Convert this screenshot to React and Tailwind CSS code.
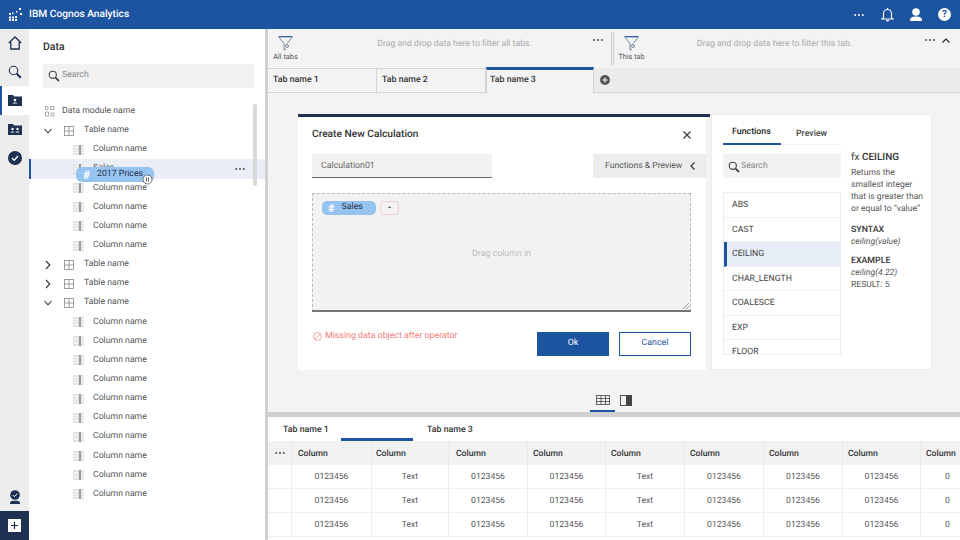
import React from "react";

const Dots = ({ className = "", color = "#555" }) => (
  <svg width="10" height="4" viewBox="0 0 10 4" className={className}>
    <circle cx="1.200" cy="2" r="1" fill={color} />
    <circle cx="5" cy="2" r="1" fill={color} />
    <circle cx="8.800" cy="2" r="1" fill={color} />
  </svg>
);

const SearchIcon = () => (
  <svg width="12" height="12" viewBox="0 0 12 12" fill="none" stroke="#444" className="shrink-0">
    <circle cx="4.800" cy="4.800" r="3.600" strokeWidth="1.100" />
    <path d="M7.600 7.600l3.400 3.400" strokeWidth="1.800" />
  </svg>
);

const ColIcon = () => (
  <svg width="11" height="10" viewBox="0 0 11 10" className="shrink-0">
    <rect x="0" y="0" width="11" height="10" fill="#e4e4e4" />
    <rect x="6" y="0" width="2" height="10" fill="#9a9a9a" />
    <path d="M1 2.500h4M1 5h4M1 7.500h4M8.500 2.500h2M8.500 5h2M8.500 7.500h2" stroke="#fff" strokeWidth="0.800" />
  </svg>
);

const TableIcon = () => (
  <svg width="10" height="10" viewBox="0 0 10 10" fill="none" stroke="#888" strokeWidth="0.800" className="shrink-0">
    <rect x="0.500" y="0.500" width="9" height="9" />
    <path d="M5 0.500v9M0.500 5h9" />
  </svg>
);

const Chevron = ({ open }) => (
  <svg width="8" height="10" viewBox="0 0 8 10" fill="none" stroke="#333" strokeWidth="1.100" className="shrink-0">
    {open ? <path d="M0.500 3l3.500 3.800L7.500 3" /> : <path d="M2 1l3.800 4L2 9" />}
  </svg>
);

const FunnelIcon = () => (
  <svg width="15" height="15" viewBox="0 0 15 15" fill="none" stroke="#5a6b85" strokeWidth="0.800">
    <path d="M0.500 0.700h14" stroke="#1f4f97" strokeWidth="1.200" />
    <path d="M1 1.500l5 6v6.500l2-1M14 1.500L9.200 7.500" />
    <circle cx="9" cy="10" r="1.500" />
  </svg>
);

const Row = ({ children, className = "" }) => (
  <div className={`h-[19.150px] flex items-center ${className}`}>{children}</div>
);

const Column = ({ label = "Column name", className = "" }) => (
  <Row className={`pl-[44px] ${className}`}>
    <ColIcon />
    <span className="ml-[9px] text-[#555]">{label}</span>
  </Row>
);

const TableRow = ({ open }) => (
  <Row className="pl-[15px]">
    <Chevron open={open} />
    <span className="ml-[12px]"><TableIcon /></span>
    <span className="ml-[10px] text-[#555]">Table name</span>
  </Row>
);

const Rail = () => (
  <div className="w-[29px] shrink-0 bg-[#ececec] flex flex-col">
    <div className="h-[28.600px] flex items-center justify-center">
      <svg width="14" height="14" viewBox="0 0 14 14" fill="none" stroke="#1e3152" strokeWidth="1.300"><path d="M0.800 7L7 1l6.200 6M2.800 6v7h8.400V6" /></svg>
    </div>
    <div className="h-[28.600px] flex items-center justify-center">
      <svg width="14" height="14" viewBox="0 0 14 14" fill="none" stroke="#1e3152"><circle cx="5.500" cy="5.500" r="4.200" strokeWidth="1.100" /><path d="M8.800 8.800l4 4" strokeWidth="2" /></svg>
    </div>
    <div className="h-[28.600px] bg-white border-l-2 border-[#1d54a0] flex items-center justify-center pr-[1px] pt-[1px]">
      <svg width="14" height="11" viewBox="0 0 14 11"><path d="M0 0h5l1 1.500h8V11H0z" fill="#1e3152" /><circle cx="7" cy="5" r="1.300" fill="#fff" /><path d="M4.600 8.600c.3-1.600 4.500-1.600 4.800 0z" fill="#fff" /></svg>
    </div>
    <div className="h-[28.600px] flex items-center justify-center">
      <svg width="14" height="11" viewBox="0 0 14 11"><path d="M0 0h5l1 1.500h8V11H0z" fill="#1e3152" /><circle cx="4.500" cy="5" r="1.200" fill="#fff" /><circle cx="9.500" cy="5" r="1.200" fill="#fff" /><path d="M2.500 8.500c.2-1.500 3.800-1.500 4 0zM7.500 8.500c.2-1.500 3.800-1.500 4 0z" fill="#fff" /></svg>
    </div>
    <div className="h-[28.600px] flex items-center justify-center">
      <svg width="14" height="14" viewBox="0 0 14 14"><circle cx="7" cy="7" r="7" fill="#1e3152" /><path d="M4 7l2.200 2.200L10 5" fill="none" stroke="#fff" strokeWidth="1.300" /></svg>
    </div>
    <div className="flex-1" />
    <div className="h-[28px] flex items-center justify-center">
      <svg width="12" height="14" viewBox="0 0 12 14"><circle cx="6" cy="5" r="4.800" fill="#1e3152" /><path d="M3.800 5l1.600 1.600L8.300 3.800" fill="none" stroke="#fff" strokeWidth="1" /><path d="M1 14c0-3 1.500-3.200 5-3.200s5 .2 5 3.200z" fill="#1e3152" /></svg>
    </div>
    <div className="h-[29px] bg-[#1e3152] flex items-center justify-center">
      <div className="w-[13px] h-[13px] bg-white flex items-center justify-center">
        <svg width="7" height="7" viewBox="0 0 7 7" stroke="#1e3152" strokeWidth="1.200"><path d="M3.500 0v7M0 3.500h7" /></svg>
      </div>
    </div>
  </div>
);

const DataPanel = () => (
  <div className="w-[236px] shrink-0 bg-white relative text-[8.700px]">
    <div className="h-[35px] pl-[14px] pt-[11px] text-[10.500px] font-medium text-[#333] leading-[13px]">Data</div>
    <div className="ml-[14px] w-[211px] h-[24px] bg-[#f1f1f1] flex items-center pl-[5px] gap-[2px] text-[#888]">
      <SearchIcon />
      <span>Search</span>
    </div>
    <div className="pt-[14px]">
      <Row className="pl-[16px]">
        <svg width="10" height="11" viewBox="0 0 10 11" fill="none" stroke="#999" strokeWidth="0.800" className="shrink-0">
          <path d="M0.500 0.500h2.500v3H0.500zM5.500 0.500H9v3H5.500zM0.500 6h3v4h-3zM6 7h3v3H6z" />
        </svg>
        <span className="ml-[7px] text-[#555]">Data module name</span>
      </Row>
      <TableRow open />
      <Column />
      <Column label="Sales" className="bg-[#eaeff7] border-l-2 border-[#1d54a0] !pl-[42px]" />
      <Column />
      <Column />
      <Column />
      <Column />
      <TableRow />
      <TableRow />
      <TableRow open />
      {Array.from({ length: 10 }).map((_, i) => <Column key={i} />)}
    </div>
    <div className="absolute left-[224px] top-[75px] w-[4px] h-[82px] rounded-sm bg-[#d8d8d8]" />
    <Dots className="absolute left-[206px] top-[138px]" />
    <div className="absolute left-[47px] top-[138px] w-[78px] h-[15px] rounded-[6px] bg-[#96c4f0] flex items-center text-[#1f2d45]">
      <span className="ml-[7px] text-white text-[12px] font-bold leading-none">#</span>
      <span className="ml-[7px]">2017 Prices</span>
    </div>
    <svg width="11" height="11" viewBox="0 0 11 11" className="absolute left-[113px] top-[145px]">
      <circle cx="5.500" cy="5.500" r="4.500" fill="#fff" stroke="#333" strokeWidth="0.900" strokeDasharray="2 0.500" />
      <path d="M4.500 3.500v4M6.500 3.500v4" stroke="#333" strokeWidth="0.800" />
    </svg>
  </div>
);

const Tab = ({ label, active }) => (
  <div className={`flex items-center text-[8.800px] font-medium text-[#333] bg-[#f3f3f3] ${active ? "h-[27px] -mt-[1px] w-[108px] border-t-[3px] border-[#1d54a0] border-x border-x-[#d4d4d4] pl-[3px] pb-[2px]" : "h-[25px] w-[109px] border-r border-y border-[#d4d4d4] pl-[5px]"}`}>
    {label}
  </div>
);

const FuncItem = ({ label, active }) => (
  <div className={`h-[24.500px] flex items-center pl-[8px] pt-[2px] border-b border-[#f2f2f2] text-[8.700px] text-[#444] ${active ? "bg-[#e6edf6] border-l-[3px] border-l-[#1d54a0] !pl-[5px]" : ""}`}>
    {label}
  </div>
);

const Dialog = () => (
  <div className="ml-[30px] mt-[21px] mr-[28px] h-[256px] flex gap-[1px]">
    <div className="w-[412px] shrink-0 border-t-[3px] border-[#1e3152]">
      <div className="w-[408px] h-full bg-white">
        <div className="h-[35px] pl-[14px] flex items-center justify-between">
          <span className="text-[10.200px] font-medium text-[#333]">Create New Calculation</span>
          <svg width="8" height="8" viewBox="0 0 8 8" stroke="#333" strokeWidth="1.100" className="mr-[15px]"><path d="M0.500 0.500l7 7M7.500 0.500l-7 7" /></svg>
        </div>
        <div className="flex justify-between h-[24px] mt-[2px]">
          <div className="ml-[14px] w-[180px] bg-[#f2f2f2] border-b border-[#666] flex items-center pl-[9px] pt-[2px] text-[8.800px] text-[#666]">Calculation01</div>
          <div className="w-[113px] bg-[#ececec] flex items-center pl-[12px] gap-[8px] text-[8.600px] text-[#555]">
            <span>Functions &amp; Preview</span>
            <svg width="5" height="8" viewBox="0 0 5 8" fill="none" stroke="#333" strokeWidth="1.200"><path d="M4.500 0.500L1 4l3.500 3.500" /></svg>
          </div>
        </div>
        <div className="relative ml-[14px] mt-[15px] w-[379px] h-[119px] bg-[#f2f2f2] border-x border-t border-dashed border-[#bbb] border-b-0">
          <div className="flex items-center pl-[9px] pt-[7px] gap-[4px]">
            <div className="w-[54px] h-[14px] rounded-[5px] bg-[#96c4f0] flex items-center text-[8.800px] text-[#1f2d45]">
              <span className="ml-[6px] text-white font-bold text-[11px] leading-none">#</span>
              <span className="ml-[7px]">Sales</span>
            </div>
            <div className="w-[19px] h-[14px] rounded-[4px] border border-[#f0cdd4] flex items-center justify-center text-[9px] font-bold text-[#333] leading-none">-</div>
          </div>
          <div className="absolute inset-x-0 top-[54px] text-center text-[8.800px] text-[#bbb]">Drag column in</div>
          <svg width="6" height="6" viewBox="0 0 6 6" stroke="#777" strokeWidth="0.700" className="absolute right-[1px] bottom-[3px]"><path d="M0 6l6-6M3 6l3-3" /></svg>
          <div className="absolute -left-px -right-px bottom-0 h-[2px] bg-[#777]" />
        </div>
        <div className="flex items-start justify-between mt-[20px] pl-[15px]">
          <div className="flex items-center gap-[2px] text-[8.800px] text-[#f27d78] -mt-[2px]">
            <svg width="9" height="9" viewBox="0 0 9 9" fill="none" stroke="#f27d78" strokeWidth="0.700"><circle cx="4.500" cy="4.500" r="3.900" /><path d="M1.800 7.200l5.400-5.400" /></svg>
            <span className="ml-[1px]">Missing data object after operator</span>
          </div>
          <div className="flex gap-[10px] mr-[15px]">
            <div className="w-[72px] h-[24px] bg-[#1d54a0] text-white text-[8.800px] flex items-center justify-center">Ok</div>
            <div className="w-[72px] h-[24px] border border-[#1d54a0] bg-white text-[#1d54a0] text-[8.800px] flex items-center justify-center">Cancel</div>
          </div>
        </div>
      </div>
    </div>
    <div className="flex-1 bg-white flex pl-[11px] border border-[#ececec]">
      <div className="w-[118px] shrink-0">
        <div className="h-[30px] flex text-[8.800px] font-medium text-[#333] items-center border-b border-[#f2f2f2]">
          <div className="w-[58px] h-full border-b-2 border-[#1d54a0] flex items-center pl-[9px] -mb-px pt-[8px] text-[#222]">Functions</div>
          <div className="pl-[15px] pt-[10px] text-[#444]">Preview</div>
        </div>
        <div className="h-[24px] bg-[#f2f2f2] mt-[9px] flex items-center pl-[5px] gap-[1px] pt-[1px] text-[8.700px] text-[#888]">
          <SearchIcon />
          <span>Search</span>
        </div>
        <div className="mt-[14px] h-[163px] border border-[#eeeeee] overflow-hidden">
          <FuncItem label="ABS" />
          <FuncItem label="CAST" />
          <FuncItem label="CEILING" active />
          <FuncItem label="CHAR_LENGTH" />
          <FuncItem label="COALESCE" />
          <FuncItem label="EXP" />
          <FuncItem label="FLOOR" />
        </div>
      </div>
      <div className="pl-[10px] pt-[37px] text-[8.600px] leading-[12px] text-[#555]">
        <div className="text-[10px] text-[#333] leading-[12px] mb-[3px]">fx <span className="font-medium">CEILING</span></div>
        <div>Returns the</div>
        <div>smallest integer</div>
        <div>that is greater than</div>
        <div>or equal to “value”</div>
        <div className="font-medium text-[#333] mt-[9px] text-[8.800px]">SYNTAX</div>
        <div className="italic">ceiling(value)</div>
        <div className="font-medium text-[#333] mt-[7px] text-[8.800px]">EXAMPLE</div>
        <div className="italic">ceiling(4.22)</div>
        <div>RESULT: 5</div>
      </div>
    </div>
  </div>
);

const widths = ["w-[80px]", "w-[77px]", "w-[79px]", "w-[78px]", "w-[79px]", "w-[79px]", "w-[79px]", "w-[78px]", "w-[39px]"];
const headPad = ["pl-[6px]", "pl-[4px]", "pl-[7px]", "pl-[5px]", "pl-[5px]", "pl-[5px]", "pl-[5px]", "pl-[5px]", "pl-[5px]"];
const cells = ["0123456", "Text", "0123456", "0123456", "Text", "0123456", "0123456", "0123456", "0"];

const DataTable = () => (
  <div className="text-[8.600px]">
    <div className="h-[24px] flex bg-[#f2f2f2] text-[#333] font-medium">
      <div className="w-[24px] shrink-0 flex items-center justify-center border-r border-[#eaeaea]"><Dots /></div>
      {cells.map((_, i) => (
        <div key={i} className={`${widths[i]} ${headPad[i]} shrink-0 border-r border-[#eaeaea] last:border-r-0 flex items-center pt-[2px]`}>Column</div>
      ))}
    </div>
    {[0, 1, 2].map((r) => (
      <div key={r} className="h-[24px] flex border-b border-[#eeeeee] text-[#555]">
        <div className="w-[24px] shrink-0 border-r border-[#eeeeee]" />
        {cells.map((c, i) => (
          <div key={i} className={`${widths[i]} shrink-0 border-r border-[#eeeeee] last:border-r-0 flex items-center pt-[2px] ${i === 8 ? "pl-[24px]" : "justify-center"}`}>{c}</div>
        ))}
      </div>
    ))}
  </div>
);

const Main = () => (
  <div className="flex-1 min-w-0 flex flex-col border-l-[3px] border-[#d0d0d0] overflow-hidden">
    <div className="h-[39px] bg-[#f3f3f3] flex shrink-0">
      <div className="w-[343px] flex relative">
        <div className="w-[35px] flex flex-col items-center pt-[7px] text-[7.300px] text-[#555]">
          <FunnelIcon />
          <span className="mt-[1px]">All tabs</span>
        </div>
        <div className="flex-1 text-center pt-[9px] text-[8.700px] text-[#aaa] pr-[5px]">Drag and drop data here to filter all tabs.</div>
        <Dots className="absolute right-[8px] top-[9px]" />
      </div>
      <div className="w-[3px] my-[3px] border-x border-[#ccc]" />
      <div className="flex-1 flex relative">
        <div className="w-[35px] flex flex-col items-center pt-[7px] text-[7.300px] text-[#555]">
          <FunnelIcon />
          <span className="mt-[1px]">This tab</span>
        </div>
        <div className="flex-1 text-center pt-[9px] text-[8.700px] text-[#aaa] pr-[60px]">Drag and drop data here to filter this tab.</div>
        <Dots className="absolute right-[25px] top-[9px]" />
        <svg width="8" height="5" viewBox="0 0 8 5" fill="none" stroke="#222" strokeWidth="1.100" className="absolute right-[10px] top-[9px]"><path d="M0.500 4.500L4 1l3.500 3.500" /></svg>
      </div>
    </div>
    <div className="h-[25px] bg-[#ebebeb] flex shrink-0 border-b border-[#d4d4d4]">
      <Tab label="Tab name 1" />
      <Tab label="Tab name 2" />
      <Tab label="Tab name 3" active />
      <div className="ml-[6px] flex items-center">
        <div className="w-[10px] h-[10px] rounded-full bg-[#555] flex items-center justify-center">
          <svg width="6" height="6" viewBox="0 0 6 6" stroke="#fff" strokeWidth="1.100"><path d="M3 0.500v5M0.500 3h5" /></svg>
        </div>
      </div>
    </div>
    <div className="h-[319px] bg-[#f3f3f3] shrink-0 relative">
      <Dialog />
      <div className="absolute left-[322px] bottom-0 h-[25px] w-[25px] border-b-[2px] border-[#1d54a0] flex items-center justify-center pt-[2px]">
        <svg width="14" height="10" viewBox="0 0 14 10" fill="none" stroke="#444" strokeWidth="0.800"><rect x="0.500" y="0.500" width="13" height="9" /><path d="M0.500 3.500h13M0.500 6.500h13M5 0.500v9M9.500 0.500v9" /></svg>
      </div>
      <div className="absolute left-[352px] bottom-0 h-[25px] flex items-center pt-[1px]">
        <svg width="12" height="11" viewBox="0 0 12 11"><rect x="0.500" y="0.500" width="6" height="10" fill="none" stroke="#444" strokeWidth="0.900" /><rect x="6" y="0" width="6" height="11" fill="#444" /></svg>
      </div>
    </div>
    <div className="h-[5px] bg-[#d0d0d0] shrink-0" />
    <div className="h-[24px] bg-white flex shrink-0 text-[8.800px] font-medium text-[#333]">
      <div className="w-[73px] pl-[15px] pt-[7px] leading-[12px]">Tab name 1</div>
      <div className="w-[72px] h-[24px] border-b-[3px] border-[#1d54a0]" />
      <div className="pl-[14px] pt-[7px] leading-[12px]">Tab name 3</div>
    </div>
    <DataTable />
  </div>
);

export default function App() {
  return (
    <div className="w-[960px] h-[540px] overflow-hidden flex flex-col bg-white [text-rendering:geometricPrecision] font-['Roboto','Liberation_Sans',Arial,sans-serif]">
      <header className="h-[29px] shrink-0 bg-[#1d54a0] flex items-center text-white pl-[8px]">
        <svg width="14" height="13" viewBox="0 0 14 13" fill="#fff">
          <rect x="1" y="5" width="2" height="2" /><rect x="1" y="8.500" width="2" height="2" /><rect x="4" y="8.500" width="2" height="2" /><rect x="1" y="11" width="2" height="2" /><rect x="4" y="11" width="2" height="2" /><rect x="7" y="11" width="2" height="2" /><rect x="7" y="8" width="2" height="2" /><rect x="4" y="4.500" width="1.500" height="1.500" /><rect x="8" y="3" width="1.500" height="1.500" /><rect x="11" y="0" width="2" height="2" /><rect x="12" y="5" width="2" height="2" />
        </svg>
        <span className="ml-[7px] text-[10.200px] font-medium">IBM Cognos Analytics</span>
        <div className="flex-1" />
        <Dots color="#fff" className="mr-[17px]" />
        <svg width="13" height="15" viewBox="0 0 13 15" fill="none" stroke="#fff" strokeWidth="1.100" className="mr-[16px]"><path d="M2.500 11V6.500a4 4 0 018 0V11l1.500 1H1zM5.200 13a1.400 1.400 0 002.600 0M6.500 2.500V1" /></svg>
        <svg width="12" height="13" viewBox="0 0 12 13" fill="#fff" className="mr-[16px]"><circle cx="6" cy="4" r="3.800" /><path d="M0 13c0-3.500 2-4.500 6-4.500s6 1 6 4.500z" /></svg>
        <div className="w-[13px] h-[13px] mr-[9px] rounded-full bg-white text-[#1d54a0] text-[10px] font-bold flex items-center justify-center leading-none">?</div>
      </header>
      <div className="flex-1 min-h-0 flex">
        <Rail />
        <DataPanel />
        <Main />
      </div>
    </div>
  );
}
